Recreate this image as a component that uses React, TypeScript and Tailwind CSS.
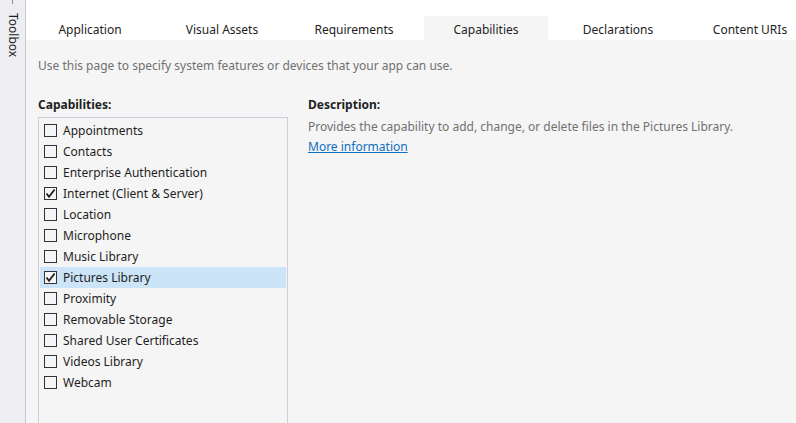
import React, { useState } from 'react';

const tabs = ['Application', 'Visual Assets', 'Requirements', 'Capabilities', 'Declarations', 'Content URIs'];

const capabilities = [
  { name: 'Appointments', checked: false },
  { name: 'Contacts', checked: false },
  { name: 'Enterprise Authentication', checked: false },
  { name: 'Internet (Client & Server)', checked: true },
  { name: 'Location', checked: false },
  { name: 'Microphone', checked: false },
  { name: 'Music Library', checked: false },
  { name: 'Pictures Library', checked: true },
  { name: 'Proximity', checked: false },
  { name: 'Removable Storage', checked: false },
  { name: 'Shared User Certificates', checked: false },
  { name: 'Videos Library', checked: false },
  { name: 'Webcam', checked: false },
];

function CheckBox({ checked }: { checked: boolean }) {
  return (
    <div className="w-[13px] h-[13px] border border-[#333337] bg-[#f5f5f5] flex items-center justify-center shrink-0">
      {checked && (
        <svg width="11" height="11" viewBox="0 0 11 11">
          <path d="M1.5 5.5 L4 8.8 L9.6 1.5" fill="none" stroke="#1e1e1e" strokeWidth="1.8" />
        </svg>
      )}
    </div>
  );
}

export default function App() {
  const [selected, setSelected] = useState('Pictures Library');

  return (
    <div
      className="w-[796px] h-[423px] flex overflow-hidden text-[12px] text-[#1e1e1e]"
      style={{ fontFamily: '"Noto Sans", "Open Sans", sans-serif' }}
    >
      {/* toolbox strip */}
      <div className="w-[26px] shrink-0 bg-[#eeeef2] border-r border-[#c8c8dc] flex flex-col items-center">
        <div className="w-px h-[4px] bg-[#8a8a9a] mb-[9px]" />
        <div className="[writing-mode:vertical-rl] text-[12px] leading-[14px] text-[#1e1e1e]">Toolbox</div>
      </div>

      <div className="flex-1 flex flex-col">
        {/* tab header */}
        <div className="h-[40px] bg-white flex items-end pl-[2px] shrink-0">
          {tabs.map((t) => (
            <div
              key={t}
              className={`w-[124px] h-[24px] mr-[8px] pt-[4px] shrink-0 flex items-center justify-center ${t === 'Capabilities' ? 'bg-[#f5f5f5]' : ''}`}
            >
              {t}
            </div>
          ))}
        </div>

        <div className="flex-1 bg-[#f5f5f5] px-[12px] pt-[18px]">
          <p className="text-[#717171] leading-[16px]">Use this page to specify system features or devices that your app can use.</p>

          <div className="flex mt-[23px]">
            <div className="w-[250px] shrink-0">
              <div className="font-bold leading-[16px] mb-[4px]">Capabilities:</div>
              <div className="border border-[#cccedb] h-[320px] pt-[2px] px-px">
                {capabilities.map((c) => (
                  <div
                    key={c.name}
                    onClick={() => setSelected(c.name)}
                    className={`h-[21px] flex items-center gap-[6px] pl-[4px] ${selected === c.name ? 'bg-[#cce4f7]' : ''}`}
                  >
                    <CheckBox checked={c.checked} />
                    <span className="leading-[16px]">{c.name}</span>
                  </div>
                ))}
              </div>
            </div>

            <div className="ml-[20px]">
              <div className="font-bold leading-[16px] mb-[6px]">Description:</div>
              <p className="text-[#717171] leading-[16px]">Provides the capability to add, change, or delete files in the Pictures Library.</p>
              <a href="#" className="block mt-[4px] leading-[16px] text-[#0e70c0] underline">More information</a>
            </div>
          </div>
        </div>
      </div>
    </div>
  );
}
